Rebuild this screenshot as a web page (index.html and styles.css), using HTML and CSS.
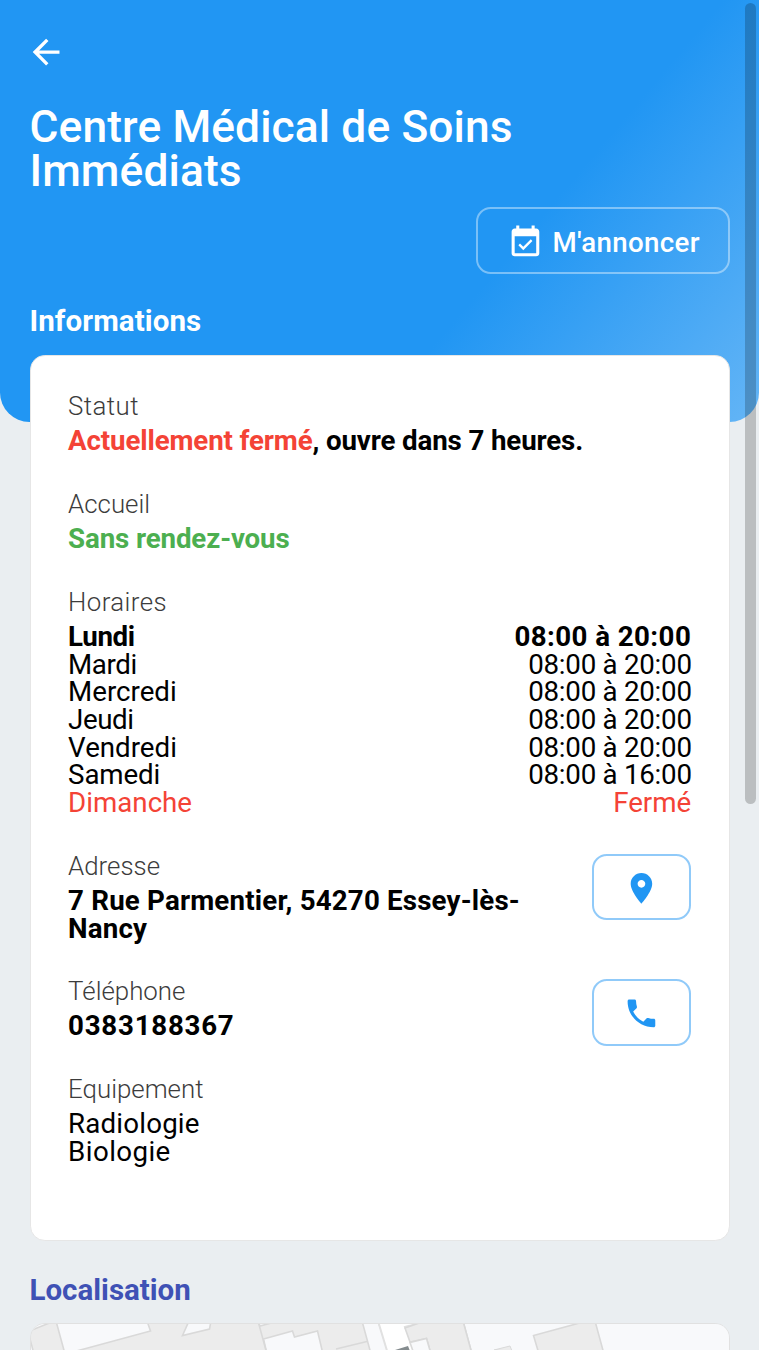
FILE: index.html
```html
<!DOCTYPE html>
<html lang="fr">
<head>
<meta charset="utf-8">
<title>Centre Médical de Soins Immédiats</title>
<link rel="stylesheet" href="styles.css">
</head>
<body>
<div class="backdrop"></div>
<main class="page">
  <a class="back" aria-label="Retour"><svg viewBox="0 0 24 24"><path d="M20 11H7.83l5.59-5.59L12 4l-8 8 8 8 1.41-1.41L7.83 13H20v-2z"/></svg></a>
  <h1 class="title">Centre Médical de Soins<br>Immédiats</h1>
  <div class="actions">
    <button class="announce"><svg class="icon" viewBox="0 0 24 24"><path d="M16.53 11.06L15.47 10l-4.88 4.88-2.12-2.12-1.06 1.06L10.59 17l5.94-5.94zM19 3h-1V1h-2v2H8V1H6v2H5c-1.11 0-1.99.9-1.99 2L3 19c0 1.1.89 2 2 2h14c1.1 0 2-.9 2-2V5c0-1.1-.9-2-2-2zm0 16H5V8h14v11z"/></svg><span>M'annoncer</span></button>
  </div>
  <h2 class="heading">Informations</h2>
  <section class="card">
    <div class="item">
      <div class="label wide">Statut</div>
      <div class="value strong snug"><span class="closed">Actuellement fermé</span>, ouvre dans 7 heures.</div>
    </div>
    <div class="item">
      <div class="label">Accueil</div>
      <div class="value strong open snug">Sans rendez-vous</div>
    </div>
    <div class="item">
      <div class="label wide">Horaires</div>
      <div class="value day strong"><span class="tight">Lundi</span><span class="wide">08:00 à 20:00</span></div>
      <div class="value day"><span class="tight">Mardi</span><span class="time">08:00 à 20:00</span></div>
      <div class="value day"><span>Mercredi</span><span class="time">08:00 à 20:00</span></div>
      <div class="value day"><span class="tight">Jeudi</span><span class="time">08:00 à 20:00</span></div>
      <div class="value day"><span>Vendredi</span><span class="time">08:00 à 20:00</span></div>
      <div class="value day"><span class="snug">Samedi</span><span class="time">08:00 à 16:00</span></div>
      <div class="value day closed"><span>Dimanche</span><span>Fermé</span></div>
    </div>
    <div class="item split">
      <div>
        <div class="label">Adresse</div>
        <div class="value strong loose">7 Rue Parmentier, 54270 Essey-lès-<br>Nancy</div>
      </div>
      <button class="square" aria-label="Itinéraire"><svg class="icon" viewBox="0 0 24 24"><path d="M12 2C8.13 2 5 5.13 5 9c0 5.25 7 13 7 13s7-7.75 7-13c0-3.87-3.13-7-7-7zm0 9.5c-1.38 0-2.5-1.12-2.5-2.5s1.12-2.5 2.5-2.5 2.5 1.12 2.5 2.5-1.12 2.5-2.5 2.5z"/></svg></button>
    </div>
    <div class="item split phone">
      <div>
        <div class="label">Téléphone</div>
        <div class="value strong number">0383188367</div>
      </div>
      <button class="square" aria-label="Appeler"><svg class="icon" viewBox="0 0 24 24"><path d="M6.54 3H4c-.55 0-1 .45-1 1 0 9.39 7.61 17 17 17 .55 0 1-.45 1-1v-3.49c0-.55-.45-1-1-1-1.24 0-2.45-.2-3.57-.57-.35-.11-.74-.03-1.02.24l-2.2 2.2c-2.83-1.44-5.15-3.75-6.59-6.59l2.2-2.21c.28-.26.36-.65.25-1C8.7 6.45 8.5 5.25 8.5 4c0-.55-.45-1-1-1z"/></svg></button>
    </div>
    <div class="item">
      <div class="label">Equipement</div>
      <div class="value loose">Radiologie</div>
      <div class="value wide">Biologie</div>
    </div>
  </section>
  <h2 class="heading place">Localisation</h2>
  <section class="map">
    <svg viewBox="30 1323 700 60" preserveAspectRatio="xMinYMin slice">
      <rect x="30" y="1323" width="700" height="60" fill="#ececec"/>
      <g fill="#f8f9fb" stroke="#d9d9d9" stroke-width="1.6">
        <path d="M28 1333L53 1323H28z"/>
        <path d="M31 1340l4 15h-10z"/>
        <path d="M57 1322L66 1355 85 1350 151.500 1332 148 1322z"/>
        <path d="M190 1322L183.500 1336.500 210.500 1330 212 1322z"/>
        <path d="M259 1322l2 5 19-5z"/>
        <path d="M264.500 1340L293.500 1332 295.500 1338 318.500 1332 324 1355 268 1355z"/>
        <path d="M363 1322L372 1355H390L379 1322z"/>
        <path d="M259 1322L268 1355M337 1350L368 1342.500" fill="none"/>
        <path d="M464 1322L473 1355H540L534.500 1336.500 588 1322z"/>
        <path d="M596 1322L605 1355H735V1322z"/>
      </g>
      <path d="M379 1322L389 1355H418L406 1328 424 1323V1322z" fill="#fff" stroke="#e1e1e1" stroke-width="2"/>
      <path d="M406 1329L426 1322H464L473 1355H432L427.500 1339.500 411 1343z" fill="#ececec" stroke="#d9d9d9" stroke-width="1.600"/>
      <path d="M411 1343.500L427.500 1339.500 432 1355H415z" fill="#f8f9fb" stroke="#d9d9d9" stroke-width="1.600"/>
      <path d="M408 1322l2 4 12-4z" fill="#f8f9fb"/>
      <path d="M495 1351L511 1347 513 1352z" fill="#ececec" stroke="#d9d9d9"/>
      <path d="M396 1351L409 1347 411 1352z" fill="#858c8f"/>
    </svg>
  </section>
</main>
<div class="scrollbar"></div>
</body>
</html>
```
FILE: styles.css
```css
* { box-sizing: border-box; }
body {
  position: relative;
  height: 1350px;
  margin: 0;
  overflow: hidden;
  background: #eaeef1;
  color: #000;
  font-family: Roboto, "Liberation Sans", sans-serif;
  font-size: 27.7px;
}
.backdrop {
  position: absolute;
  inset: 0 0 auto;
  height: 421.5px;
  border-radius: 0 0 29.5px 29.5px;
  background: linear-gradient(130deg, #2196f3 65%, #64b5f6 100%);
}
.page { position: relative; padding: 31.6px 29.5px 0; }
svg { display: block; fill: currentColor; }
.back { display: block; width: 40.2px; margin-left: -4px; color: #fff; }
.back svg { width: 40.2px; height: 40.2px; }
.title {
  margin: 33.3px 0 13.6px;
  color: #fff;
  font-size: 44.3px;
  font-weight: 500;
  line-height: 44.3px;
  letter-spacing: .12px;
}
.actions { display: flex; justify-content: flex-end; }
button {
  display: flex;
  align-items: center;
  justify-content: center;
  height: 66.5px;
  padding: 3px 0 0;
  border: 2px solid rgba(33, 150, 243, .5);
  border-radius: 14.8px;
  background: none;
  color: #2196f3;
  font: 500 27.7px/1 Roboto, sans-serif;
}
.icon { width: 36.9px; height: 36.9px; }
.announce {
  width: 254px;
  padding-left: 2px;
  gap: 8.5px;
  border-color: rgba(255, 255, 255, .4);
  color: #fff;
  letter-spacing: .32px;
}
.announce span { padding-top: 1px; }
.heading {
  margin: 33.5px 0 18px;
  color: #fff;
  font-size: 29.5px;
  font-weight: 700;
  line-height: 29.5px;
  letter-spacing: .1px;
}
.place { margin-top: 35px; color: #3f51b5; letter-spacing: 0; }
.card {
  height: 886px;
  padding: 38.2px 37.3px 0 37.6px;
  border: 1.9px solid #e6e6e6;
  border-radius: 14.8px;
  background: #fff;
}
.item { margin-bottom: 36.9px; }
.label {
  margin-bottom: 7.4px;
  color: #3c3c3c;
  font-size: 25.85px;
  font-weight: 300;
  line-height: 25.85px;
}
.value { line-height: 27.7px; }
.strong { font-weight: 700; }
.day { display: flex; justify-content: space-between; }
.closed { color: #f44336; }
.open { color: #4caf50; }

.tight { letter-spacing: -.4px; }
.snug { letter-spacing: -.13px; }
.loose { letter-spacing: .18px; }
.wide { letter-spacing: .42px; }
.number { letter-spacing: .75px; }
.time { margin-right: -.5px; letter-spacing: -.25px; }

.split { display: flex; justify-content: space-between; align-items: flex-start; }
.square { width: 99.7px; }
.phone { height: 61px; }
.map {
  height: 60px;
  border: 1.9px solid #e1e1e1;
  border-radius: 14.8px 14.8px 0 0;
  overflow: hidden;
}
.map svg { width: 700px; height: 60px; margin: -2px; }
.scrollbar {
  position: absolute;
  top: 3px;
  right: 3px;
  width: 11px;
  height: 801px;
  border-radius: 6px;
  background: rgba(0, 0, 0, .2);
}
```
